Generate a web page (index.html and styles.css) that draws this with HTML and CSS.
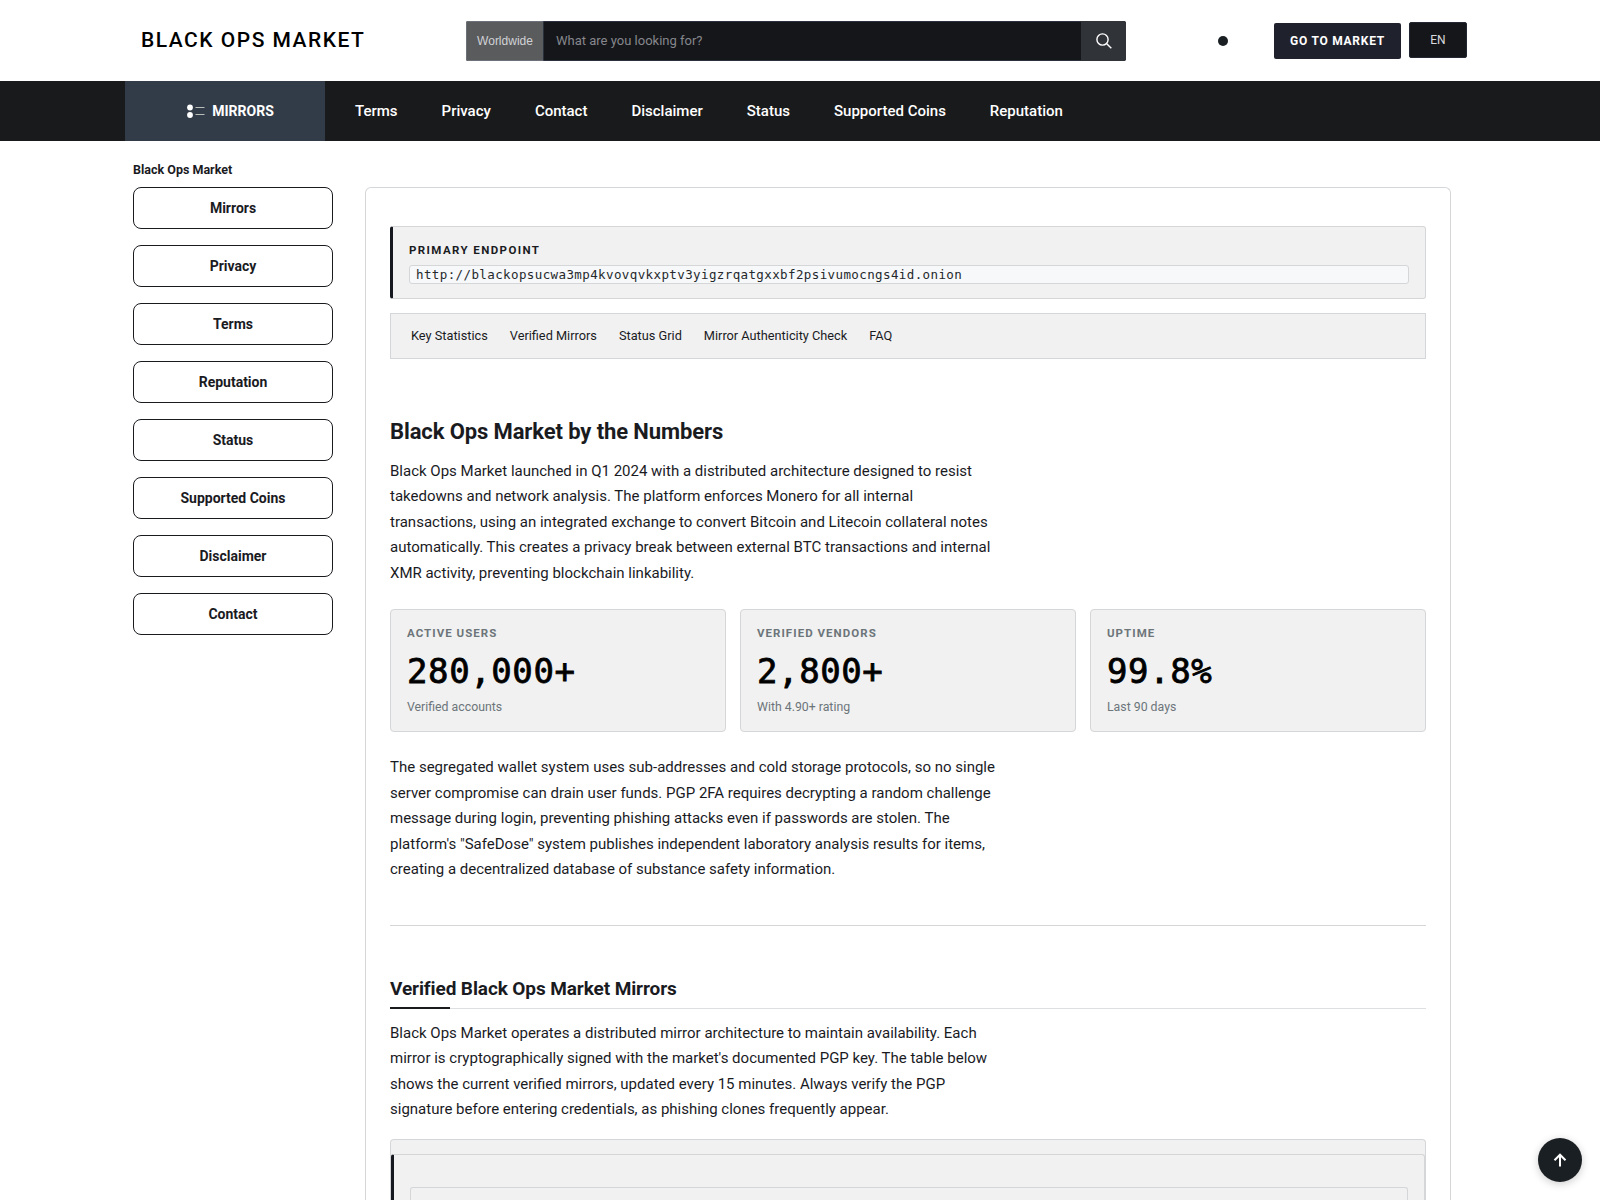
FILE: index.html
```html
<!DOCTYPE html>
<html lang="en">
<head>
<meta charset="utf-8">
<title>Black Ops Market</title>
<link rel="stylesheet" href="styles.css">
</head>
<body>
<header class="top">
  <a class="logo">BLACK OPS MARKET</a>
  <div class="search">
    <span class="region">Worldwide</span>
    <span class="query">What are you looking for?</span>
    <span class="find"><svg width="16" height="16" viewBox="0 0 16 16" fill="none" stroke="#fff" stroke-width="1.4"><circle cx="6.5" cy="6.5" r="5.6"/><path d="M10.5 10.5L15.3 15.3"/></svg></span>
  </div>
  <span class="dot"></span>
  <a class="go">GO TO MARKET</a>
  <a class="lang">EN</a>
</header>
<nav class="nav">
  <a class="mirrors"><svg width="18" height="14" viewBox="0 0 18 14"><circle cx="3" cy="3.5" r="2.9" fill="#fff"/><circle cx="3" cy="11" r="2.9" fill="#fff"/><path d="M8.500 3.500H17.500M8.500 10.500H17.500" stroke="#b9beba" stroke-width="1.200"/></svg>MIRRORS</a>
  <div class="links"><a>Terms</a><a>Privacy</a><a>Contact</a><a>Disclaimer</a><a>Status</a><a>Supported Coins</a><a>Reputation</a></div>
</nav>
<div class="page">
  <div class="crumb">Black Ops Market</div>
  <div class="columns">
    <aside class="side"><a>Mirrors</a><a>Privacy</a><a>Terms</a><a>Reputation</a><a>Status</a><a>Supported Coins</a><a>Disclaimer</a><a>Contact</a></aside>
    <main class="content">
      <div class="endpoint">
        <div class="endpoint-label">PRIMARY ENDPOINT</div>
        <code class="url">http://blackopsucwa3mp4kvovqvkxptv3yigzrqatgxxbf2psivumocngs4id.onion</code>
      </div>
      <div class="toc"><a>Key Statistics</a><a>Verified Mirrors</a><a>Status Grid</a><a>Mirror Authenticity Check</a><a>FAQ</a></div>
      <h2>Black Ops Market by the Numbers</h2>
      <p>Black Ops Market launched in Q1 2024 with a distributed architecture designed to resist takedowns and network analysis. The platform enforces Monero for all internal transactions, using an integrated exchange to convert Bitcoin and Litecoin collateral notes automatically. This creates a privacy break between external BTC transactions and internal XMR activity, preventing blockchain linkability.</p>
      <div class="stats">
        <div class="stat"><div class="stat-label">ACTIVE USERS</div><div class="value">280,000+</div><div class="note">Verified accounts</div></div>
        <div class="stat"><div class="stat-label">VERIFIED VENDORS</div><div class="value">2,800+</div><div class="note">With 4.90+ rating</div></div>
        <div class="stat"><div class="stat-label">UPTIME</div><div class="value">99.8%</div><div class="note">Last 90 days</div></div>
      </div>
      <p>The segregated wallet system uses sub-addresses and cold storage protocols, so no single server compromise can drain user funds. PGP 2FA requires decrypting a random challenge message during login, preventing phishing attacks even if passwords are stolen. The platform's "SafeDose" system publishes independent laboratory analysis results for items, creating a decentralized database of substance safety information.</p>
      <hr>
      <h3>Verified Black Ops Market Mirrors</h3>
      <p>Black Ops Market operates a distributed mirror architecture to maintain availability. Each mirror is cryptographically signed with the market's documented PGP key. The table below shows the current verified mirrors, updated every 15 minutes. Always verify the PGP signature before entering credentials, as phishing clones frequently appear.</p>
      <div class="panel"><div class="panel-inner"><div class="panel-field"></div></div></div>
    </main>
  </div>
</div>
<a class="to-top"><svg width="14" height="14" viewBox="0 0 14 14" fill="none" stroke="#fff" stroke-width="2"><path d="M7 13.500V2M1.500 7.200L7 1.700L12.500 7.200"/></svg></a>
</body>
</html>
```
FILE: styles.css
```css
* { box-sizing: border-box; }
body { margin: 0; height: 1200px; overflow: hidden; background: #fff; color: #1a1b1f; font: 15px/1.7 Roboto, sans-serif; }
.top { height: 81px; padding-left: 141px; display: flex; align-items: center; }
.logo { width: 325px; font-size: 21px; font-weight: 500; letter-spacing: 1.5px; line-height: 30px; color: #000; padding-bottom: 1px; }
.search { width: 660px; height: 40px; display: flex; border: 1px solid #2a303c; border-radius: 2px; background: #15161a; font-size: 13px; }
.region { width: 78px; margin: -1px 0 -1px -1px; background: #5a5b5d; border: 1px solid #6b7079; border-right-color: #2a303c; border-radius: 2px 0 0 2px; color: #d0d2d5; font: 12px "Liberation Sans", sans-serif; display: flex; align-items: center; justify-content: center; }
.query { flex: 1; color: #85878c; padding-left: 12px; line-height: 37px; }
.find { width: 45px; margin: -1px -1px -1px 0; border-radius: 0 2px 2px 0; background: #303338; display: flex; align-items: center; justify-content: center; }
.dot { width: 10px; height: 10px; border-radius: 50%; background: #1a1f23; margin: 0 46px 0 92px; }
.dot + .go { margin-right: 8px; }
.go { width: 127px; height: 36px; border-radius: 2px; background: #1f222d; color: #fff; font-size: 12px; font-weight: 700; letter-spacing: .75px; line-height: 36px; text-align: center; }
.lang { width: 58px; height: 36px; margin-top: -2px; border: 1px solid #222732; border-radius: 2px; background: #15161a; color: #d8dade; font-size: 12px; line-height: 34px; text-align: center; }
.nav { height: 60px; padding-left: 125px; background: #191a1b; display: flex; color: #fff; font-weight: 500; line-height: 60px; }
.mirrors { width: 200px; background: #323b48; display: flex; align-items: center; justify-content: center; gap: 7px; font-size: 14px; font-weight: 700; padding-left: 11px; }
.links { display: flex; gap: 44px; padding-left: 30px; }
.page { padding: 19px 149px 0 133px; }
.crumb { height: 27px; font-size: 12.5px; font-weight: 700; line-height: 20px; }
.columns { display: flex; gap: 32px; }
.side { width: 200px; display: flex; flex-direction: column; gap: 16px; }
.side a { height: 42px; border: 1px solid #1a1b1f; border-radius: 8px; font-size: 14px; font-weight: 700; line-height: 40px; text-align: center; }
.content { flex: 1; height: 1013px; border: 1px solid #d4d6d8; border-bottom: 0; border-radius: 6px 6px 0 0; padding: 38px 24px 0; overflow: hidden; }
.endpoint { height: 73px; background: #f1f1f1; border: 1px solid #d4d6d8; border-left: 3px solid #15181f; border-radius: 3px; padding: 16px; }
.endpoint-label { font-size: 11.5px; font-weight: 700; letter-spacing: 1.4px; line-height: 15px; }
.url { display: block; height: 19px; margin-top: 7px; padding-left: 6px; background: #f6f8f9; border: 1px solid #d4d6d8; border-radius: 3px; color: #25282c; font: 12.5px/17px "DejaVu Sans Mono", monospace; letter-spacing: .39px; }
.toc { height: 46px; margin-top: 14px; padding-left: 20px; background: #f1f1f1; border: 1px solid #d4d6d8; display: flex; gap: 22px; font-size: 12.75px; line-height: 44px; }
h2 { margin: 58px 0 12.9px; font-size: 22px; font-weight: 700; line-height: 29px; letter-spacing: -.11px; }
p { width: 610px; margin: 0; }
.stats { display: grid; grid-template-columns: repeat(3, 1fr); gap: 14px; margin: 22.6px 0 23.4px; }
.stat { height: 123px; background: #f1f1f1; border: 1px solid #d4d6d8; border-radius: 4px; padding: 16px; color: #6c757a; }
.stat-label { font-size: 11.5px; font-weight: 700; letter-spacing: 1.04px; line-height: 15px; }
.value { margin-top: 12px; color: #000; font: 400 34px/36px "DejaVu Sans Mono", monospace; letter-spacing: .6px; -webkit-text-stroke: .8px #000; }
.note { margin-top: 8px; font-size: 12.3px; line-height: 20px; }
hr { margin: 42px 0 50px; border: 0; height: 1px; background: #d4d6d8; }
h3 { height: 33px; margin: 0 0 12px; font-size: 19px; font-weight: 700; line-height: 26px; letter-spacing: -.1px; border-bottom: 1px solid #dedfe1; }
h3::after { content: ""; display: block; width: 60px; height: 2px; margin-top: 5px; background: #1a1b1f; }
.panel { height: 61px; margin-top: 16px; border: 1px solid #d4d6d8; border-bottom: 0; border-radius: 4px 4px 0 0; background: #f1f1f1; padding-top: 14px; }
.panel-inner { height: 46px; border: 1px solid #d4d6d8; border-bottom: 0; border-left: 3px solid #15181f; border-radius: 3px 3px 0 0; padding: 32px 16px 0; }
.panel-field { height: 13px; border: 1px solid #d4d6d8; border-bottom: 0; border-radius: 3px 3px 0 0; }
.to-top { position: absolute; left: 1538px; top: 1138px; width: 44px; height: 44px; border-radius: 50%; background: #1a1f23; box-shadow: 0 2px 8px #0003; display: flex; align-items: center; justify-content: center; }
```
